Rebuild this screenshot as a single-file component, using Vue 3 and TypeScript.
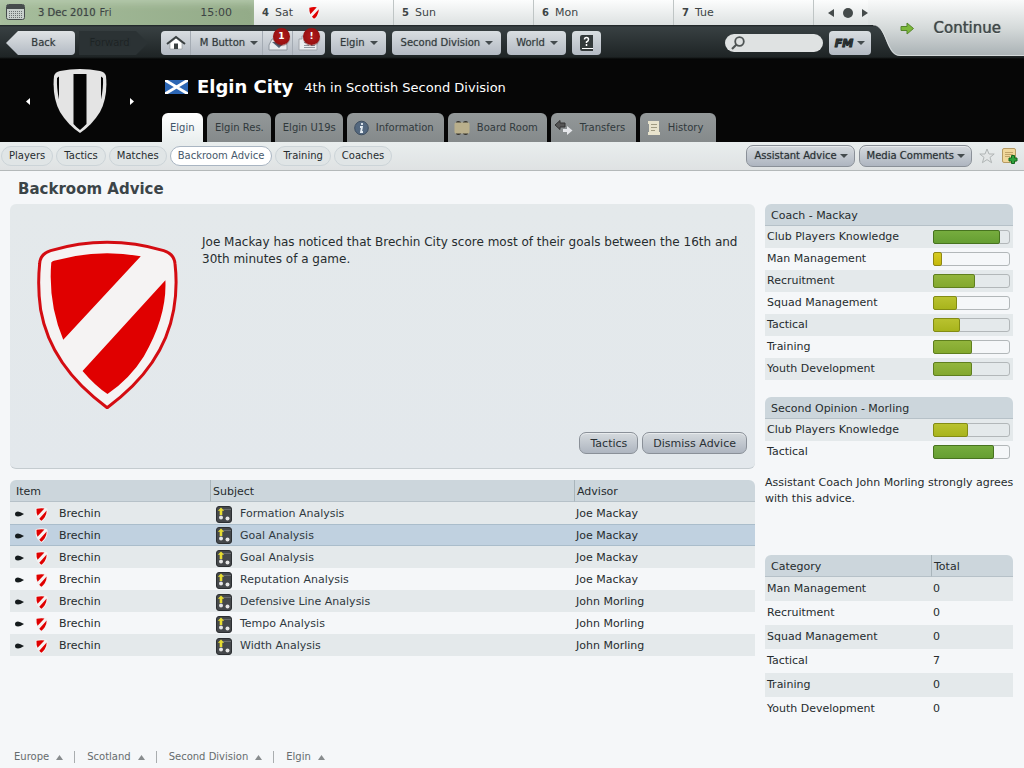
<script setup lang="ts">
interface Meter { label: string; value: number; tone: 'green' | 'mid' | 'lime' | 'yellow' }

const days = [
  { num: 4, name: 'Sat', match: true },
  { num: 5, name: 'Sun', match: false },
  { num: 6, name: 'Mon', match: false },
  { num: 7, name: 'Tue', match: false },
]
const menus = ['Elgin', 'Second Division', 'World']
const tabs = [
  { label: 'Elgin', icon: '' },
  { label: 'Elgin Res.', icon: '' },
  { label: 'Elgin U19s', icon: '' },
  { label: 'Information', icon: 'info' },
  { label: 'Board Room', icon: 'board' },
  { label: 'Transfers', icon: 'transfers' },
  { label: 'History', icon: 'history' },
]
const pills = ['Players', 'Tactics', 'Matches', 'Backroom Advice', 'Training', 'Coaches']
const advice = [
  { subject: 'Formation Analysis', advisor: 'Joe Mackay' },
  { subject: 'Goal Analysis', advisor: 'Joe Mackay', selected: true },
  { subject: 'Goal Analysis', advisor: 'Joe Mackay' },
  { subject: 'Reputation Analysis', advisor: 'Joe Mackay' },
  { subject: 'Defensive Line Analysis', advisor: 'John Morling' },
  { subject: 'Tempo Analysis', advisor: 'John Morling' },
  { subject: 'Width Analysis', advisor: 'John Morling' },
]
const coaches: { title: string; rows: Meter[] }[] = [
  {
    title: 'Coach - Mackay',
    rows: [
      { label: 'Club Players Knowledge', value: 89, tone: 'green' },
      { label: 'Man Management', value: 12, tone: 'yellow' },
      { label: 'Recruitment', value: 56, tone: 'mid' },
      { label: 'Squad Management', value: 32, tone: 'lime' },
      { label: 'Tactical', value: 36, tone: 'lime' },
      { label: 'Training', value: 52, tone: 'mid' },
      { label: 'Youth Development', value: 52, tone: 'mid' },
    ],
  },
  {
    title: 'Second Opinion - Morling',
    rows: [
      { label: 'Club Players Knowledge', value: 47, tone: 'lime' },
      { label: 'Tactical', value: 81, tone: 'green' },
    ],
  },
]
const categories = [
  { name: 'Man Management', total: 0 },
  { name: 'Recruitment', total: 0 },
  { name: 'Squad Management', total: 0 },
  { name: 'Tactical', total: 7 },
  { name: 'Training', total: 0 },
  { name: 'Youth Development', total: 0 },
]
const crumbs = ['Europe', 'Scotland', 'Second Division', 'Elgin']
</script>

<template>
  <div class="page">
    <svg class="defs" aria-hidden="true">
      <symbol id="badge" viewBox="110 120 422 508">
        <path fill="#f5f3f3" d="M117 192Q118 162 150 152Q235 127 320 127Q405 127 490 152Q522 162 524 192Q532 260 520 330Q490 500 320 624Q150 500 120 330Q110 260 117 192Z" />
        <path fill="#e00000" d="M152 188Q154 184 160 182Q240 160 320 160Q370 160 421 169L188 420Q142 310 152 188ZM495 241Q500 350 430 470Q390 535 321 583Q285 560 246 514Z" />
      </symbol>
    </svg>

    <header class="top">
      <div class="bars">
        <div class="dates">
          <div class="today">
            <svg width="20" height="17" viewBox="0 0 20 17"><rect x=".5" y=".5" width="18" height="15" rx="2" fill="#c8d0cc" stroke="#464c4c" /><path fill="#464c4c" d="M1 1h17v4H1z" /><path d="M3 7.5h13M3 9.5h13M3 11.5h13M3 13.5h13" stroke="#6b7272" stroke-dasharray="1 1" /></svg>
            <span class="date">3 Dec 2010</span><span class="weekday">Fri</span>
            <span class="clock">15:00</span>
          </div>
          <div v-for="d in days" :key="d.num" class="day">
            <b>{{ d.num }}</b><span>{{ d.name }}</span>
            <svg v-if="d.match" class="mini" width="12" height="14"><use href="#badge" /></svg>
          </div>
          <div class="pager">
            <button aria-label="Earlier"><svg width="6" height="8"><path d="M6 0v8L0 4z" fill="#444a4a" /></svg></button>
            <button aria-label="Now"><svg width="10" height="10"><circle cx="5" cy="5" r="5" fill="#444a4a" /></svg></button>
            <button aria-label="Later"><svg width="6" height="8"><path d="M0 0v8l6-4z" fill="#444a4a" /></svg></button>
          </div>
        </div>
        <nav class="nav">
          <button class="arrow back"><span>Back</span></button>
          <button class="arrow forward" disabled><span>Forward</span></button>
          <div class="group">
            <button class="home" aria-label="Home">
              <svg width="20" height="16" viewBox="0 0 20 16"><path d="M4 8v6h12V8l-6-5z" fill="#fff" stroke="#8b9192" stroke-width=".6" /><path d="M1 9l9-7 9 7" fill="none" stroke="#3b4142" stroke-width="2" /><path fill="#3b4142" d="M8 8.500h4V14H8z" /></svg>
            </button>
            <button class="manager">M Button<i class="caret" /></button>
            <button class="inbox" aria-label="Messages">
              <svg width="20" height="16" viewBox="0 0 20 16"><path d="M4 4h12l3 6v5H1v-5z" fill="#e9edf0" stroke="#8f969e" /><path d="M8 3h5v4h4l-6 6-7-6h4z" fill="#56677a" /></svg>
              <em>1</em>
            </button>
            <button class="inbox" aria-label="News">
              <svg width="20" height="16" viewBox="0 0 20 16"><path d="M4 1h15v14H1V4h3z" fill="#eceef0" stroke="#a0a5ab" /><path d="M6 4.500h11M6 7.500h5M13 7.500h4M6 10.500h5M13 10.500h4M6 12.500h11" stroke="#9298a0" /></svg>
              <em>!</em>
            </button>
          </div>
          <button v-for="m in menus" :key="m" class="btn">{{ m }}<i class="caret" /></button>
          <button class="btn help" aria-label="Help">
            <svg width="13" height="16" viewBox="0 0 13 16"><path d="M2 0h11v13H2v1h11v2H2a2 2 0 0 1-2-2V2a2 2 0 0 1 2-2z" fill="#343a3b" /><path d="M2 13.500h11" stroke="#fff" /><path d="M4.500 4.500Q4.500 2.500 6.500 2.500T8.500 4.500Q8.500 6 6.500 7v1M6.500 9v2" stroke="#fff" stroke-width="1.500" fill="none" /></svg>
          </button>
          <label class="search">
            <svg width="14" height="14" viewBox="0 0 14 14"><circle cx="8.500" cy="5.500" r="4.300" fill="none" stroke="#4e5454" stroke-width="1.800" /><path d="M5.500 8.500L1 13" stroke="#4e5454" stroke-width="2.200" /></svg>
            <input type="text" aria-label="Search">
          </label>
          <button class="btn fm"><b>FM</b><i class="caret" /></button>
        </nav>
      </div>
      <button class="continue">
        <svg class="curve" viewBox="0 0 156 56" preserveAspectRatio="none">
          <defs><linearGradient id="silver" x2="0" y2="1"><stop offset="0" stop-color="#f9fafa" /><stop offset=".5" stop-color="#d5dada" /><stop offset="1" stop-color="#a9b1b4" /></linearGradient></defs>
          <path d="M0 0H156V56H32C17 56 19 25 5 25H0Z" fill="url(#silver)" />
          <path d="M156 55.500H32C18 55 19 25 5 25" fill="none" stroke="#eef2f2" stroke-opacity=".6" />
        </svg>
        <svg width="15" height="13" viewBox="0 0 15 13"><path d="M1 4.500h6V1l6.500 5.500L7 12V8.500H1z" fill="#7cb83a" stroke="#55852c" /></svg>
        <span>Continue</span>
      </button>
    </header>

    <section class="hero">
      <div class="club">
        <button aria-label="Previous club"><svg width="4" height="7"><path d="M4 0v7L0 3.500z" fill="#fff" /></svg></button>
        <svg width="54" height="65" viewBox="0 0 54 65"><path d="M1 7Q2 3 7 2Q27-2 47 2Q52 3 53 7Q55 28 47 43Q39 56 27 64Q15 56 7 43Q-1 28 1 7Z" fill="#e4e4e4" /><path d="M20.500 5h13v50q-3 3-6.500 6q-4-3-6.500-6zM4 9l2-1.500v23Q3.500 19 4 9zM50 9l-2-1.500v23Q50.500 19 50 9z" fill="#050505" /></svg>
        <button aria-label="Next club"><svg width="4" height="7"><path d="M0 0v7l4-3.500z" fill="#fff" /></svg></button>
      </div>
      <div class="heading">
        <h1>
          <svg width="23" height="14" viewBox="0 0 23 14"><path fill="#2c66b4" d="M0 0h23v14H0z" /><path d="M0 0l23 14M23 0L0 14" stroke="#fff" stroke-width="2.800" /></svg>
          <span>Elgin City</span><small>4th in Scottish Second Division</small>
        </h1>
        <nav class="tabs">
          <a v-for="(t, i) in tabs" :key="t.label" href="#" :class="[t.icon, { on: i === 0 }]">
            <svg v-if="t.icon === 'info'" width="15" height="16" viewBox="0 0 15 16"><circle cx="7.500" cy="8" r="6.800" fill="#54687f" stroke="#3e4e60" /><path d="M8 3v2M6 7h2l-1 5h2" stroke="#e4ecf2" stroke-width="1.800" fill="none" /></svg>
            <svg v-else-if="t.icon === 'board'" width="16" height="16" viewBox="0 0 16 16"><path d="M2 2q2-2 5 0v2H2zM9 2q3-2 5 0v2H9zM2 12h5v2q-3 2-5 0zM9 12h5v2q-2 2-5 0z" fill="#34322c" /><rect x=".5" y="2.500" width="15" height="11" rx="1.500" fill="#b9af8c" /></svg>
            <svg v-else-if="t.icon === 'transfers'" width="19" height="16" viewBox="0 0 19 16"><path d="M1 5l5-4.500v2.500h5v4H6v2.500z" fill="#555" stroke="#333" /><path d="M9 9h4V6l5.500 4.500L13 15v-3H9z" fill="#e5e7ea" /></svg>
            <svg v-else-if="t.icon === 'history'" width="14" height="16" viewBox="0 0 14 16"><path d="M1 1h11v11h1v3H1v-3h1V4H1z" fill="#e8e3cd" /><path d="M4 4.500h6M4 7.500h6M4 10.500h4" stroke="#a09b82" /></svg>
            {{ t.label }}
          </a>
        </nav>
      </div>
    </section>

    <div class="sub">
      <a v-for="p in pills" :key="p" href="#" class="pill" :class="{ on: p === 'Backroom Advice' }">{{ p }}</a>
      <div class="tools">
        <button class="round">Assistant Advice<i class="caret" /></button>
        <button class="round">Media Comments<i class="caret" /></button>
        <button class="icon" aria-label="Favourite"><svg width="16" height="16" viewBox="0 0 16 16"><path d="M8 1l2 5h5.200l-4.200 3.400 1.600 5.300L8 11.600l-4.600 3.100L5 9.400.8 6H6z" fill="#e2e5e5" stroke="#b0b5b5" /></svg></button>
        <button class="icon" aria-label="Add note"><svg width="16" height="16" viewBox="0 0 16 16"><rect x=".5" y=".5" width="13" height="14" rx="1.500" fill="#f0d79b" stroke="#b59a63" /><path d="M3 4.500h8M3 6.500h8M3 8.500h5" stroke="#c2a46a" /><path d="M9.500 7.500h3v2.500H15v3h-2.500v2.500h-3V13H7v-3h2.500z" fill="#2fa23b" stroke="#14671f" /></svg></button>
      </div>
    </div>

    <h2>Backroom Advice</h2>

    <main>
      <div class="left">
        <article class="advice">
          <svg class="crest" width="141" height="169" viewBox="110 120 422 508">
            <path d="M117 192Q118 162 150 152Q235 127 320 127Q405 127 490 152Q522 162 524 192Q532 260 520 330Q490 500 320 624Q150 500 120 330Q110 260 117 192Z" fill="#f5f3f3" stroke="#d40c12" stroke-width="9" />
            <path fill="#e00000" d="M152 188Q154 184 160 182Q240 160 320 160Q370 160 421 169L188 420Q142 310 152 188ZM495 241Q500 350 430 470Q390 535 321 583Q285 560 246 514Z" />
          </svg>
          <div class="body">
            <p>Joe Mackay has noticed that Brechin City score most of their goals between the 16th and 30th minutes of a game.</p>
            <div class="actions">
              <button class="round">Tactics</button>
              <button class="round">Dismiss Advice</button>
            </div>
          </div>
        </article>

        <table class="grid items">
          <colgroup><col class="c1"><col class="c2"><col class="c3"></colgroup>
          <thead><tr><th>Item</th><th>Subject</th><th>Advisor</th></tr></thead>
          <tbody>
            <tr v-for="(a, i) in advice" :key="i" :class="{ sel: a.selected }">
              <td>
                <div class="cell">
                  <svg class="dart" width="9" height="6" viewBox="0 0 9 6"><path d="M0 3Q0 .5 3 .5Q5 .5 9 3Q5 5.500 3 5.500Q0 5.500 0 3z" fill="#151b1d" /></svg>
                  <svg class="shield" width="13" height="15"><use href="#badge" /></svg>
                  Brechin
                </div>
              </td>
              <td>
                <div class="cell subject">
                  <svg width="16" height="17" viewBox="0 0 16 17"><rect x=".5" y=".5" width="15" height="16" rx="2.500" fill="#45484b" stroke="#2c2f32" /><path d="M7 3.500h8" stroke="#6a6d70" /><path d="M5 1.500l3.200 3.300H6.300V9H3.700V4.800H1.800z" fill="#e6dc32" /><circle cx="5" cy="11.500" r="2" fill="#e6e6e6" /><circle cx="11.500" cy="12.500" r="2" fill="#e6e6e6" /></svg>
                  <span>{{ a.subject }}</span>
                </div>
              </td>
              <td>{{ a.advisor }}</td>
            </tr>
          </tbody>
        </table>
      </div>

      <aside>
        <table v-for="c in coaches" :key="c.title" class="grid coach">
          <thead><tr><th colspan="2">{{ c.title }}</th></tr></thead>
          <tbody>
            <tr v-for="r in c.rows" :key="r.label">
              <td class="skill">{{ r.label }}</td>
              <td class="metercell">
                <div class="meter" role="meter" :aria-label="r.label" aria-valuemin="0" aria-valuemax="100" :aria-valuenow="r.value">
                  <div class="fill" :class="r.tone" :style="{ width: r.value + '%' }" />
                </div>
              </td>
            </tr>
          </tbody>
        </table>
        <p class="note">Assistant Coach John Morling strongly agrees with this advice.</p>
        <table class="grid totals">
          <thead><tr><th>Category</th><th class="num">Total</th></tr></thead>
          <tbody>
            <tr v-for="c in categories" :key="c.name"><td>{{ c.name }}</td><td>{{ c.total }}</td></tr>
          </tbody>
        </table>
      </aside>
    </main>

    <footer>
      <button v-for="c in crumbs" :key="c">{{ c }}<svg width="7" height="5"><path d="M0 5h7L3.500 0z" fill="#888c8e" /></svg></button>
    </footer>
  </div>
</template>

<style>
html, body { background: #f5f7f9; }
</style>

<style scoped>
* { box-sizing: border-box; }
.page { min-height: 100vh; display: flex; flex-direction: column; font: 11px/16px "DejaVu Sans", Verdana, sans-serif; color: #262c2e; }
.defs { position: absolute; width: 0; height: 0; }
svg { flex: none; display: block; }
button { font: inherit; color: inherit; border: 0; padding: 0; background: none; display: flex; align-items: center; justify-content: center; white-space: nowrap; }
a { color: inherit; text-decoration: none; white-space: nowrap; }
.caret { width: 0; height: 0; border: 4px solid transparent; border-top-color: #444b4e; border-bottom: 0; flex: none; }

.top { display: flex; height: 60px; background: linear-gradient(#1c2224 25px, #384042 27px, #1e2425 57px, #050606 59px); }
.bars { flex: 1; min-width: 0; }
.dates { display: grid; grid-template-columns: 254fr repeat(4, 140fr) 54px; height: 25px; background: linear-gradient(#fcfdfd, #dde1e1); color: #3d4445; }
.today { display: flex; align-items: center; padding: 0 22px 0 6px; background: linear-gradient(90deg, #a6bd9c, #93ab88); box-shadow: inset 0 7px 8px -4px #b7cbaf; font-size: 10px; }
.date { margin: 0 4px 0 12px; text-shadow: 0 0 1px #3d444580; }
.clock { margin-left: auto; font-size: 11px; }
.day { display: flex; align-items: center; gap: 6px; padding-left: 8px; border-right: 1px solid #bfc5c5; }
.day b { font-size: 10px; }
.mini { margin-left: 9px; }
.pager { display: flex; align-items: center; justify-content: flex-end; gap: 9px; }
.nav { display: flex; align-items: center; height: 35px; padding: 1px 0 0 6px; gap: 6px; font-size: 10px; }
.nav button { color: #32393c; text-shadow: 0 0 1px #32393c80; }
.btn, .group { height: 24px; border-radius: 4px; background: linear-gradient(#d9dee1, #b3bac3); }
.btn { padding: 0 8px 0 9px; gap: 5px; }
.arrow { width: 69px; height: 24px; }
.back { background: linear-gradient(#dfe3e5, #b3bac3); clip-path: polygon(0 50%, 12px 0, 100% 0, 100% 100%, 12px 100%); border-radius: 0 4px 4px 0; padding-left: 6px; }
.nav .forward { margin: 0 7px 0 -2px; color: #1d2324; background: #2b3234; clip-path: polygon(0 0, 57px 0, 100% 50%, 57px 100%, 0 100%); padding-right: 8px; }
.group { display: flex; width: 164px; }
.group button + button { border-left: 1px solid #a4abb3; }
.home { width: 29px; }
.group .manager { width: 72px; gap: 5px; padding-left: 5px; }
.group .inbox { width: 30px; position: relative; }
.inbox em { position: absolute; top: -3px; right: 2px; width: 17px; height: 17px; border-radius: 50%; background: radial-gradient(#b41c1c, #8a0a0a); box-shadow: 0 1px 1px #5008; color: #fff; font: bold 9px/16px "DejaVu Sans", sans-serif; text-align: center; }
.btn.help { padding: 0 8px; }
.search { margin-left: auto; display: flex; align-items: center; width: 98px; height: 18px; padding: 0 6px; border-radius: 9px; background: #dfe2e2; }
.search input { width: 100%; min-width: 0; border: 0; background: none; font: inherit; }
.btn.fm { width: 42px; padding: 0; gap: 4px; margin-right: -3px; }
.fm b { font: italic bold 11px "DejaVu Sans", sans-serif; -webkit-text-stroke: 1px #22282a; }
.continue { position: relative; width: 156px; height: 56px; padding: 0 23px 0 32px; justify-content: space-between; font-size: 15px; color: #41484a; text-shadow: 0 0 1px #41484a, 0 1px #eef1f1; }
.continue > * { position: relative; }
.continue .curve { position: absolute; inset: 0; width: 100%; height: 100%; }

.hero { display: flex; height: 82px; background: #060606; color: #fff; }
.club { width: 162px; display: flex; align-items: center; justify-content: space-between; padding: 0 28px 0 26px; }
.heading { flex: 1; display: flex; flex-direction: column; justify-content: space-between; }
h1 { margin: 0; padding: 13px 0 0 3px; display: flex; align-items: center; font-size: 18px; line-height: 24px; }
h1 span { margin: 0 11px 0 9px; }
h1 small { font-size: 13px; font-weight: normal; padding-top: 3px; }
.tabs { display: flex; gap: 4px; font-size: 10px; }
.tabs a { display: flex; align-items: center; gap: 7px; height: 29px; padding: 0 0 0 8px; min-width: 41px; border-radius: 6px 6px 0 0; background: linear-gradient(#939899, #858a8b); color: #30393c; }
.tabs a:not([class]), .tabs a[class=""] { padding-right: 7px; }
.tabs .info { width: 97px; padding-left: 7px; }
.tabs .board { width: 99px; padding-left: 6px; }
.tabs .transfers { width: 85px; padding-left: 3px; }
.tabs .history { width: 76px; padding-left: 7px; }
.tabs a.on { background: linear-gradient(#fff, #e9eeee); color: #3f5468; }

.sub { display: flex; align-items: center; gap: 3px; height: 29px; padding: 0 6px 0 1px; border-bottom: 1px solid #b4b9ba; background: linear-gradient(#e9eeee, #dfe2e3); font-size: 10px; }
.pill { height: 20px; line-height: 18px; padding: 0 7px; border: 1px solid #ccd4d8; border-radius: 10px; background: #e0e5e6; }
.pill.on { background: #fff; border-color: #a9b5c2; color: #47596b; }
.tools { margin-left: auto; display: flex; align-items: center; gap: 4px; }
.round { height: 22px; padding: 0 7px; gap: 3px; border: 1px solid #8a9098; border-radius: 7px; background: linear-gradient(#d5dade, #aeb5c0); box-shadow: inset 0 1px #e8ebed; color: #293034; }
.tools .round { padding: 0 6px 0 7px; text-shadow: 0 0 1px #29303480; }
.icon { width: 16px; margin-left: 3px; }

h2 { margin: 0; padding: 7px 18px 0; font-size: 15px; line-height: 22px; height: 33px; color: #3b4448; }
main { display: flex; align-items: flex-start; gap: 10px; padding: 0 11px 0 10px; }
.left { flex: 1; min-width: 0; }
.advice { display: flex; min-height: 265px; padding: 36px 8px 14px 27px; gap: 24px; border-radius: 6px; border-bottom: 1px solid #c4cbcf; background: linear-gradient(#e4e9eb, #e3e8ec); font-size: 12px; line-height: 17px; margin-bottom: 11px; }
.body { flex: 1; display: flex; flex-direction: column; justify-content: space-between; }
.body p { margin: -6px 0 0; }
.actions { display: flex; justify-content: flex-end; gap: 4px; font-size: 11px; }
.actions .round { padding: 0 10px; }

.grid { width: 100%; border-collapse: separate; border-spacing: 0; table-layout: fixed; }
.grid th { height: 22px; padding: 2px 6px 0; text-align: left; font-weight: normal; background: #ccd6dc; border-bottom: 1px solid #b6c1c8; }
.grid th + th { border-left: 1px solid #a9b5bb; padding-left: 2px; }
.grid th:first-child { border-top-left-radius: 6px; }
.grid th:last-child { border-top-right-radius: 6px; }
.grid td { height: 22px; padding: 0 2px; }
.grid tbody tr:nth-child(odd) { background: #e4e9eb; }
.items .c1 { width: 200px; }
.items .c3 { width: 181px; }
.items td { padding-top: 2px; }
.grid tbody tr.sel { background: #c0d1e0; }
.items .sel td { padding-top: 1px; border-top: 1px solid #aabdcb; border-bottom: 1px solid #aabdcb; }
.cell { display: flex; align-items: center; }
.dart { margin-left: 3px; }
.shield { margin: 0 11px; }
.subject { padding-left: 4px; gap: 8px; color: #30393f; }

aside { width: 248px; flex: none; }
.coach { table-layout: auto; }
.coach + .coach { margin-top: 17px; }
.skill { width: 100%; white-space: nowrap; }
.grid .metercell { padding: 0 3px 0 0; }
.meter { width: 77px; height: 14px; border: 1px solid #b2b7b9; border-radius: 3px; }
.fill { height: 14px; margin: -1px; border: 1px solid; border-radius: 2px; }
.green { background: linear-gradient(#76ac3e, #659e32); border-color: #47731f; }
.mid { background: linear-gradient(#92b53c, #83a82e); border-color: #5f7f1e; }
.lime { background: linear-gradient(#b9c22f, #a8b41c); border-color: #838c14; }
.yellow { background: linear-gradient(#d6cb22, #c5b90c); border-color: #8f8712; }
.note { margin: 12px -8px 48px 0; min-height: 32px; }
.totals .num { width: 82px; }
.totals td { height: 24px; }

footer { display: flex; margin-top: auto; padding: 0 14px 5px; font-size: 10px; line-height: 12px; color: #666c6e; }
footer button { gap: 7px; }
footer button + button { border-left: 1px solid #a9adaf; margin-left: 11px; padding-left: 12px; }
</style>
